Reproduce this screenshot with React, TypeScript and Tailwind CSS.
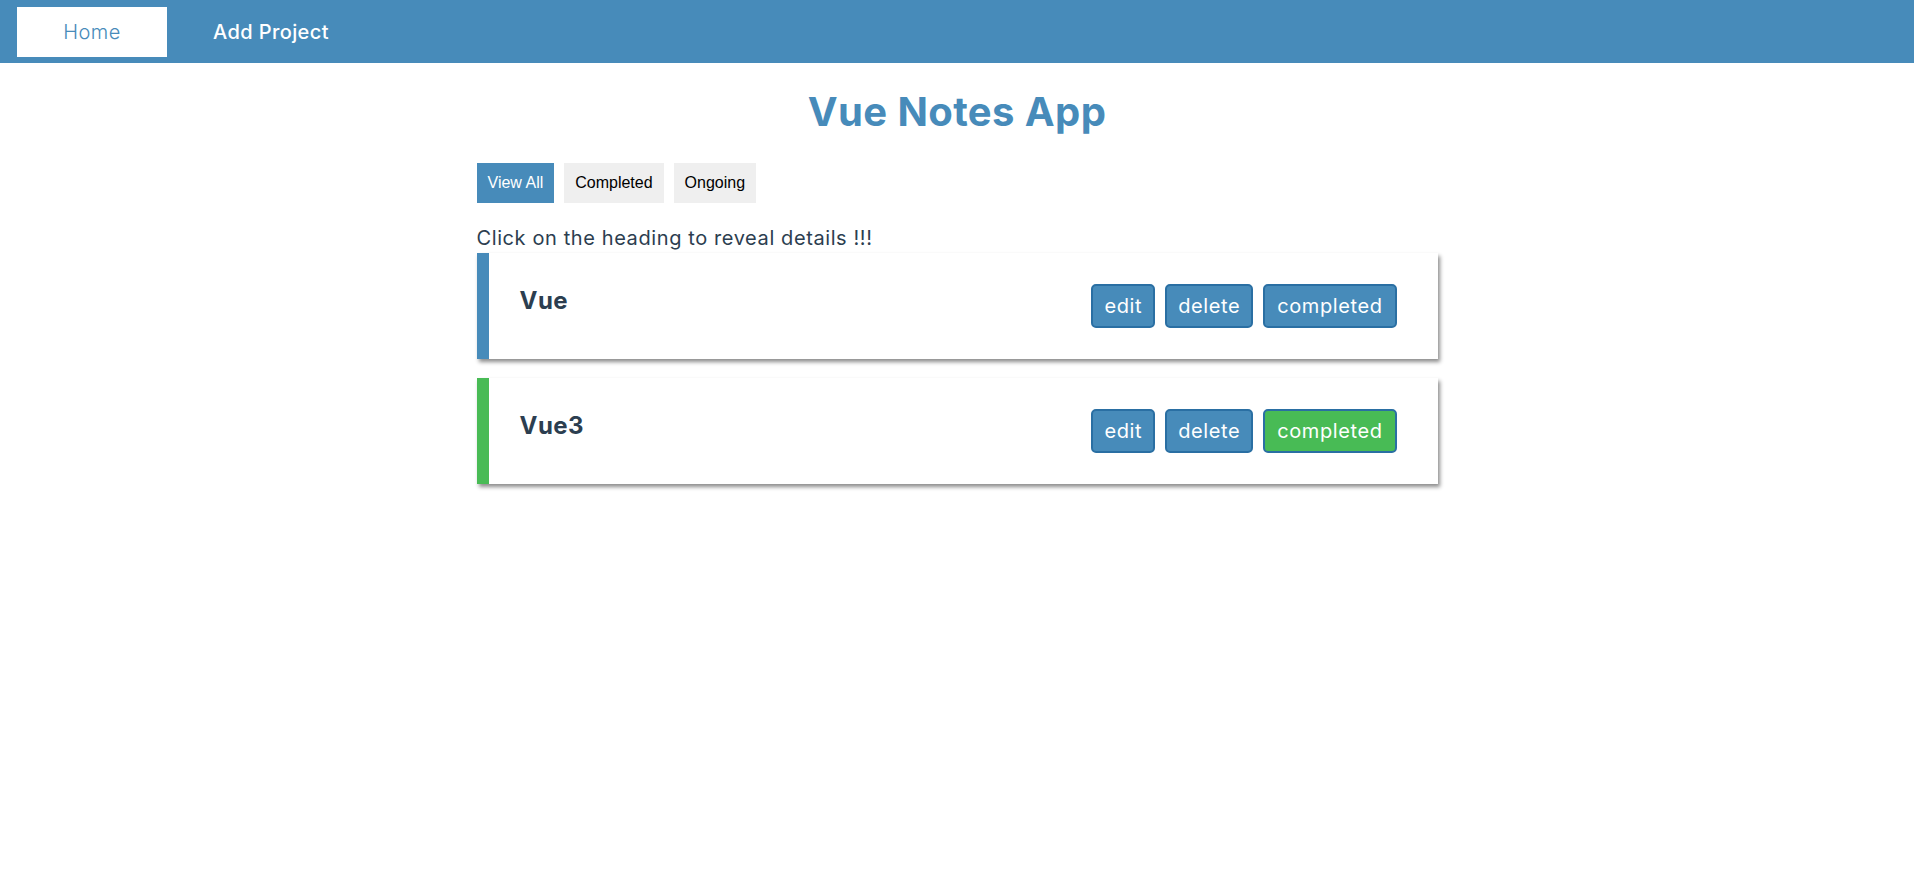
import { useState } from 'react';
import clsx from 'clsx';

type Project = { id: number; title: string; complete: boolean };

const projects: Project[] = [
  { id: 1, title: 'Vue', complete: false },
  { id: 2, title: 'Vue3', complete: true },
];

const FILTERS = ['View All', 'Completed', 'Ongoing'] as const;

export default function App() {
  const [filter, setFilter] = useState<(typeof FILTERS)[number]>('View All');

  return (
    <div className="min-h-[896px] bg-white font-['Inter',sans-serif] text-[#2c3e50]">
      <nav className="flex h-[63px] items-center gap-[23px] bg-[#478bba] px-[17px]">
        <a className="flex h-[50px] w-[150px] items-center justify-center bg-white text-[20px] font-light tracking-[0.02em] text-[#478bba]">
          Home
        </a>
        <a className="px-[23px] text-[20px] font-medium tracking-[0.02em] text-white">Add Project</a>
      </nav>

      <h1 className="mt-[25px] text-center text-[40px] leading-[48px] font-bold tracking-[0.01em] text-[#478bba]">
        Vue Notes App
      </h1>

      <div className="mx-auto w-[961px]">
        <div className="mt-[27px] flex gap-[10px] font-['Liberation_Sans',sans-serif] text-[16px]">
          {FILTERS.map((f) => (
            <button
              key={f}
              onClick={() => setFilter(f)}
              className={clsx(
                'h-[40px] px-[11px]',
                filter === f ? 'bg-[#478bba] text-white' : 'bg-[#efefef] text-black'
              )}
            >
              {f}
            </button>
          ))}
        </div>

        <p className="mt-[20px] text-[20px] leading-[30px] tracking-[0.03em]">
          Click on the heading to reveal details !!!
        </p>

        <div className="flex flex-col gap-[19px]">
          {projects.map((p) => (
            <div
              key={p.id}
              className={clsx(
                'flex h-[106px] items-center justify-between border-l-[12px] bg-white pr-[41px] pl-[31px] shadow-[2px_3px_4px_rgba(0,0,0,0.45)]',
                p.complete ? 'border-[#48bb55]' : 'border-[#478bba]'
              )}
            >
              <h3 className="-mt-[10px] text-[24px] font-bold tracking-[0.02em]">{p.title}</h3>
              <div className="flex gap-[10px] text-[20px] tracking-[0.03em] text-white">
                <button className="h-[44px] rounded-[5px] border-2 border-[#2a6fa3] bg-[#478bba] px-[11px]">edit</button>
                <button className="h-[44px] rounded-[5px] border-2 border-[#2a6fa3] bg-[#478bba] px-[11px]">delete</button>
                <button
                  className={clsx(
                    'h-[44px] rounded-[5px] border-2 border-[#2a6fa3] px-[12px]',
                    p.complete ? 'bg-[#48bb55]' : 'bg-[#478bba]'
                  )}
                >
                  completed
                </button>
              </div>
            </div>
          ))}
        </div>
      </div>
    </div>
  );
}
